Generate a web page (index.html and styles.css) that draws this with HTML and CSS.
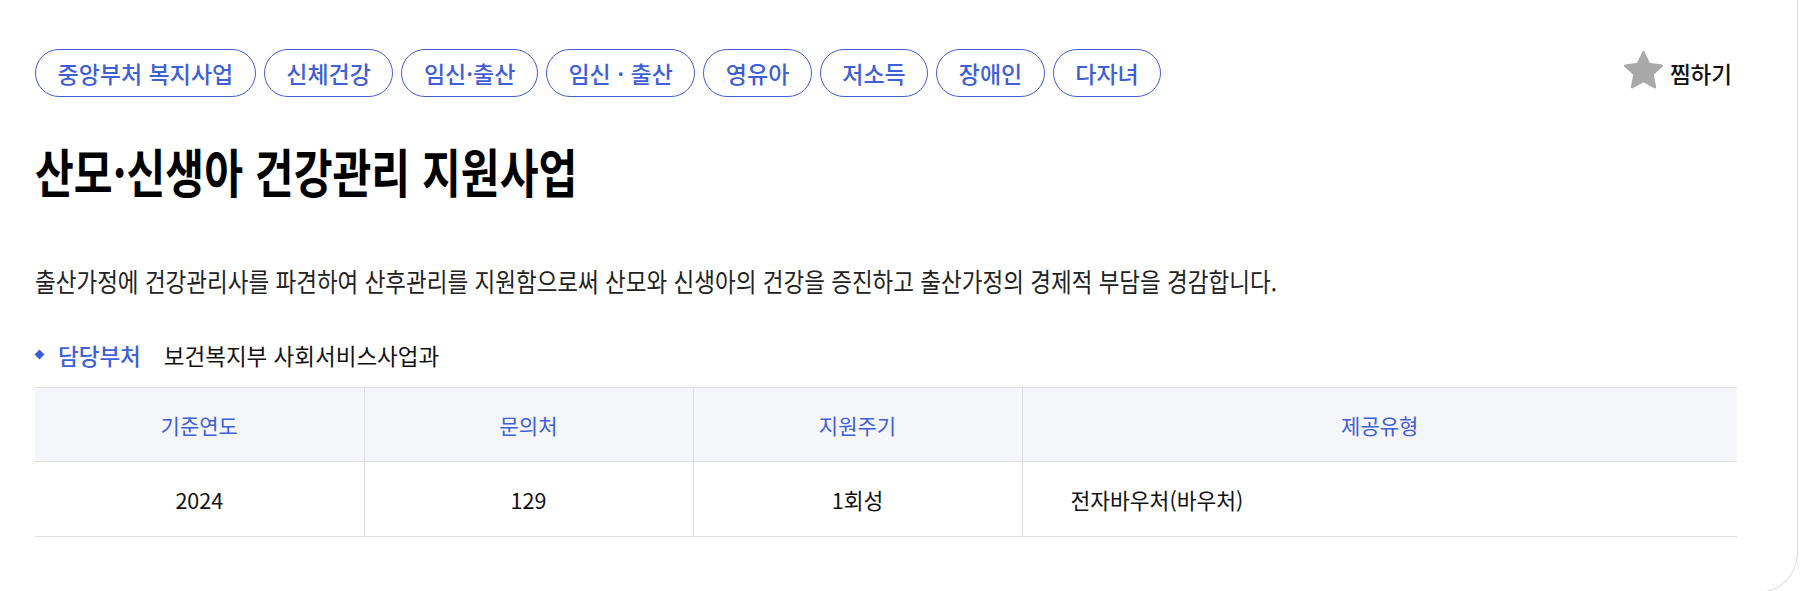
FILE: index.html
```html
<!DOCTYPE html>
<html lang="ko">
<head>
<meta charset="utf-8">
<title>산모·신생아 건강관리 지원사업</title>
<link rel="stylesheet" href="styles.css">
</head>
<body>
<div class="card">
  <div class="top">
    <ul class="tags">
      <li class="tag">중앙부처 복지사업</li>
      <li class="tag">신체건강</li>
      <li class="tag">임신·출산</li>
      <li class="tag">임신 · 출산</li>
      <li class="tag">영유아</li>
      <li class="tag">저소득</li>
      <li class="tag">장애인</li>
      <li class="tag">다자녀</li>
    </ul>
    <button class="fav" type="button">
      <svg class="star" viewBox="0 0 24 24" width="43" height="43" aria-hidden="true">
        <path d="M12 1.8l3.1 6.6 7.1.9-5.2 4.9 1.4 7.1L12 17.8l-6.4 3.5 1.4-7.1-5.2-4.9 7.1-.9z" fill="#a9a9a9" stroke="#a9a9a9" stroke-width="1.4" stroke-linejoin="round"/>
      </svg>
      <span>찜하기</span>
    </button>
  </div>
  <h1 class="title">산모·신생아 건강관리 지원사업</h1>
  <p class="desc">출산가정에 건강관리사를 파견하여 산후관리를 지원함으로써 산모와 신생아의 건강을 증진하고 출산가정의 경제적 부담을 경감합니다.</p>
  <div class="dept">
    <span class="dept-label">담당부처</span>
    <span class="dept-value">보건복지부 사회서비스사업과</span>
  </div>
  <table class="info">
    <colgroup>
      <col class="c1"><col class="c2"><col class="c3"><col class="c4">
    </colgroup>
    <thead>
      <tr><th>기준연도</th><th>문의처</th><th>지원주기</th><th>제공유형</th></tr>
    </thead>
    <tbody>
      <tr><td>2024</td><td>129</td><td>1회성</td><td class="left">전자바우처(바우처)</td></tr>
    </tbody>
  </table>
</div>
</body>
</html>
```
FILE: styles.css
```css
* { box-sizing: border-box; }
html, body { margin: 0; padding: 0; background: #fff; }
body {
  font-family: "Noto Sans CJK KR", "Noto Sans", sans-serif;
  color: #111;
  overflow: hidden;
}
.card {
  width: 1798px;
  height: 593px;
  border-right: 1px solid #dcdcdc;
  border-bottom: 1px solid #dcdcdc;
  border-bottom-right-radius: 40px;
  padding: 49px 65px 0 35px;
}
.top {
  display: flex;
  justify-content: space-between;
  align-items: center;
}
.tags {
  display: flex;
  gap: 8px;
  list-style: none;
  margin: 0;
  padding: 0;
}
.tag {
  height: 48px;
  line-height: 46px;
  padding: 0 21.5px;
  border: 1px solid #3e5fd6;
  border-radius: 24px;
  color: #3e5fd6;
  font-size: 23px;
  font-weight: 500;
}
.fav {
  display: flex;
  align-items: center;
  gap: 5px;
  background: none;
  border: 0;
  padding: 0;
  font-family: inherit;
  font-size: 22.5px;
  font-weight: 500;
  color: #111;
}
.star { display: block; margin-top: -5px; }
.title {
  margin: 44px 0 0;
  font-size: 52px;
  line-height: 60px;
  font-weight: 700;
  color: #000;
  transform: scaleX(0.812);
  transform-origin: left center;
}
.desc {
  margin: 62px 0 0;
  font-size: 26px;
  line-height: 36px;
  color: #222;
  white-space: nowrap;
  transform: scaleX(0.866);
  transform-origin: left center;
}
.dept {
  display: flex;
  align-items: center;
  margin-top: 40px;
  font-size: 22.5px;
  line-height: 32px;
}
.dept-label {
  position: relative;
  padding-left: 23px;
  color: #3e5fd6;
  font-weight: 500;
  margin-right: 23px;
}
.dept-label::before {
  content: "";
  position: absolute;
  left: 1px;
  top: 50%;
  width: 7px;
  height: 7px;
  margin-top: -4px;
  background: #3e5fd6;
  transform: rotate(45deg);
}
.dept-value { color: #111; }
.info {
  margin-top: 16px;
  width: 1702px;
  border-collapse: collapse;
  table-layout: fixed;
}
.c1, .c2, .c3 { width: 329px; }
.info th, .info td {
  border: 1px solid #dedede;
  text-align: center;
}
.info tr > :first-child { border-left: 0; }
.info tr > :last-child { border-right: 0; }
.info th {
  height: 74px;
  background: #f5f6fa;
  color: #3e5fd6;
  font-size: 21px;
  font-weight: 400;
}
.info td {
  height: 75px;
  color: #111;
  font-size: 21.5px;
}
.info td.left {
  text-align: left;
  padding-left: 48px;
}
```
